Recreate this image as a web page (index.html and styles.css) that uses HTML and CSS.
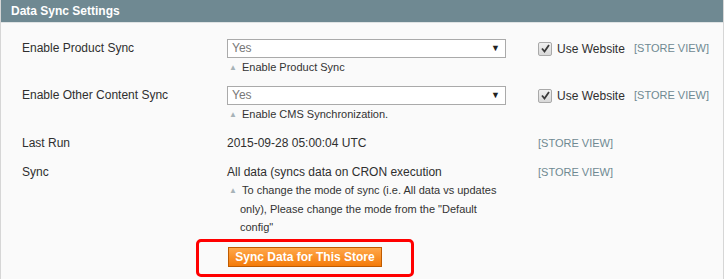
FILE: index.html
```html
<!DOCTYPE html>
<html lang="en">
<head>
    <meta charset="UTF-8" />
    <title>Data Sync Settings</title>
    <link rel="stylesheet" href="styles.css">
</head>
<body>
    <div class="section">
        <div class="section-head">Data Sync Settings</div>
        <div class="section-body">
            <div class="row">
                <div class="label">Enable Product Sync</div>
                <div class="value">
                    <div class="select"><span>Yes</span><span class="arrow">&#9660;</span></div>
                    <p class="note">Enable Product Sync</p>
                </div>
                <div class="use-default">
                    <span class="checkbox"><svg width="9" height="9" viewBox="0 0 9 9"><path d="M1 4.5 L3.5 7.5 L8 1" fill="none" stroke="#3a3a3a" stroke-width="1.8"/></svg></span>
                    Use Website
                </div>
                <div class="scope">[STORE VIEW]</div>
            </div>
            <div class="row">
                <div class="label">Enable Other Content Sync</div>
                <div class="value">
                    <div class="select"><span>Yes</span><span class="arrow">&#9660;</span></div>
                    <p class="note">Enable CMS Synchronization.</p>
                </div>
                <div class="use-default">
                    <span class="checkbox"><svg width="9" height="9" viewBox="0 0 9 9"><path d="M1 4.5 L3.5 7.5 L8 1" fill="none" stroke="#3a3a3a" stroke-width="1.8"/></svg></span>
                    Use Website
                </div>
                <div class="scope">[STORE VIEW]</div>
            </div>
            <div class="row">
                <div class="label">Last Run</div>
                <div class="value text">2015-09-28 05:00:04 UTC</div>
                <div class="scope near">[STORE VIEW]</div>
            </div>
            <div class="row">
                <div class="label">Sync</div>
                <div class="value text">
                    All data (syncs data on CRON execution
                    <p class="note">To change the mode of sync (i.e. All data vs updates only), Please change the mode from the "Default config"</p>
                    <div class="highlight">
                        <button class="btn">Sync Data for This Store</button>
                    </div>
                </div>
                <div class="scope near">[STORE VIEW]</div>
            </div>
        </div>
    </div>
</body>
</html>
```

FILE: styles.css
```css
* {
    box-sizing: border-box;
    margin: 0;
    padding: 0;
}

body {
    font-family: Arial, 'Liberation Sans', Helvetica, sans-serif;
    font-size: 12px;
    color: #2f2f2f;
    background: #fff;
}

.section {
    border: 1px solid #d6d6d6;
    border-top: none;
    min-height: 279px;
    background: #fafafa;
}

.section-head {
    background: #6f8992;
    color: #fff;
    font-weight: bold;
    font-size: 12px;
    height: 23px;
    line-height: 23px;
    padding-left: 10px;
    border-bottom: 1px solid #dfe3e4;
}

.section-body {
    padding-top: 11px;
}

.row {
    display: flex;
    align-items: flex-start;
    padding: 5px 0;
}

.row:first-child {
    padding-bottom: 4px;
}

.label {
    width: 226px;
    padding-left: 21px;
    line-height: 19px;
}

.value {
    width: 280px;
    line-height: 19px;
}

.value.text {
    line-height: 18px;
}

.select {
    width: 279px;
    height: 19px;
    border: 1px solid #aaa;
    background: #fff;
    display: flex;
    justify-content: space-between;
    align-items: center;
    padding: 0 5px 0 4px;
    color: #777;
    font-size: 12px;
}

.select .arrow {
    color: #222;
    font-size: 9px;
}

.note {
    font-size: 11px;
    line-height: 18px;
    color: #333;
    padding-left: 13px;
}

.note::before {
    content: "\25B2";
    display: inline-block;
    width: 13px;
    margin-left: -11px;
    font-size: 8px;
    color: #a7b3b8;
    vertical-align: 1px;
}

.use-default {
    margin-left: 31px;
    width: 96px;
    display: flex;
    align-items: center;
    gap: 5px;
    height: 19px;
}

.checkbox {
    width: 14px;
    height: 14px;
    border: 1px solid #a9a9a9;
    border-radius: 2px;
    background: linear-gradient(#f0f0f0, #d8d8d8);
    display: inline-flex;
    align-items: center;
    justify-content: center;
}

.scope {
    font-size: 11px;
    color: #6f8992;
    line-height: 19px;
}

.scope.near {
    margin-left: 31px;
    line-height: 18px;
}

.highlight {
    display: inline-block;
    margin: 3px 0 0 -31px;
    padding: 5px 29px 7px;
    border: 3px solid #ff0000;
    border-radius: 5px;
}

.btn {
    display: block;
    width: 154px;
    height: 20px;
    border: 1px solid #bf5b00;
    background: linear-gradient(#ffa84a, #f47b0a);
    color: #fff;
    font-family: Arial, 'Liberation Sans', sans-serif;
    font-weight: bold;
    font-size: 12px;
    line-height: 18px;
}
```
